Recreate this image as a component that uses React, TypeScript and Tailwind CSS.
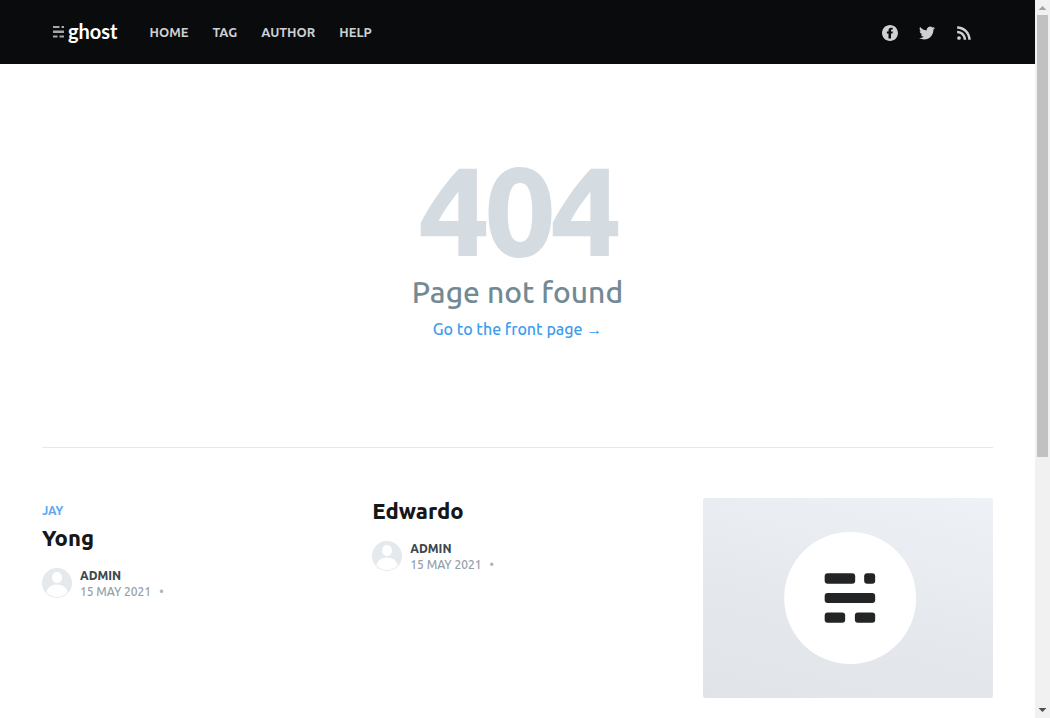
import React from "react";

const navLinks = ["Home", "Tag", "Author", "Help"];

function FacebookIcon() {
  return (
    <svg viewBox="0 0 32 32" className="size-4 fill-current" aria-hidden="true">
      <path d="M16 0C7.200 0 0 7.200 0 16s7.200 16 16 16 16-7.200 16-16S24.800 0 16 0zm5.500 9.200h-1.900c-1.300 0-1.600.7-1.600 1.700v2.300h3.600l-.5 3.900H18V27h-5v-9.900H9.700v-3.900H13v-2.800c0-3.300 2-5 5-5 1.400 0 2.700.1 3.500.2z" />
    </svg>
  );
}

function TwitterIcon() {
  return (
    <svg viewBox="0 0 24 24" className="size-4 fill-current" aria-hidden="true">
      <path d="M23.954 4.569a10 10 0 0 1-2.825.775 4.958 4.958 0 0 0 2.163-2.723 9.990 9.990 0 0 1-3.127 1.184 4.920 4.920 0 0 0-8.384 4.482C7.691 8.094 4.066 6.130 1.640 3.161a4.822 4.822 0 0 0-.666 2.475c0 1.710.87 3.213 2.188 4.096a4.904 4.904 0 0 1-2.228-.616v.061a4.923 4.923 0 0 0 3.946 4.827 4.996 4.996 0 0 1-2.212.085 4.937 4.937 0 0 0 4.604 3.417 9.868 9.868 0 0 1-6.102 2.105c-.39 0-.779-.023-1.170-.067a13.995 13.995 0 0 0 7.557 2.209c9.054 0 13.999-7.496 13.999-13.986 0-.209 0-.42-.015-.63a9.936 9.936 0 0 0 2.460-2.548l-.047-.02z" />
    </svg>
  );
}

function RssIcon() {
  return (
    <svg viewBox="0 0 24 24" className="size-4 fill-current" aria-hidden="true">
      <circle cx="4.500" cy="19.500" r="2.800" />
      <path d="M1.700 8.700v3.800c5.600 0 9.800 4.300 9.800 9.800h3.800c0-7.700-6.100-13.600-13.600-13.600zM1.700 1.700v3.800c9.300 0 16.700 7.500 16.700 16.800h3.800c0-11.400-9.200-20.600-20.500-20.600z" />
    </svg>
  );
}

function Avatar() {
  return (
    <svg viewBox="0 0 30 30" className="size-[30px] shrink-0" aria-hidden="true">
      <circle cx="15" cy="15" r="15" fill="#e3e9ed" />
      <ellipse cx="15" cy="9.500" rx="5" ry="5.700" fill="#fff" />
      <path d="M4.300 24.300C5.500 19.500 9.500 16.500 15 16.500s9.500 3 10.700 7.800C23 27.300 19.200 29 15 29S7 27.300 4.300 24.300z" fill="#fff" />
    </svg>
  );
}

function PostCard({ tag, title }: { tag?: string; title: string }) {
  return (
    <article className="flex flex-col items-start">
      <a href="#post" className="block">
        {tag && (
          <span className="block pt-[3px] pb-1 text-[12px] leading-[20px] font-semibold text-[#5aa7f0] uppercase">
            {tag}
          </span>
        )}
        <h2 className="text-[22px] leading-[26px] font-extrabold text-[#15171a]">{title}</h2>
      </a>
      <footer className="flex items-start gap-2 pt-[17px]">
        <Avatar />
        <div className="text-[12px] leading-4 uppercase">
          <a href="#admin" className="block font-extrabold text-[#3c484e]">Admin</a>
          <p className="font-medium text-[#92a0a9]">
            <time dateTime="2021-05-15">15 May 2021</time>
            <span className="px-2 text-[#a9b5bc]">•</span>
          </p>
        </div>
      </footer>
    </article>
  );
}

function CoverCard() {
  return (
    <a href="#ghost" aria-label="Ghost" className="block h-[200px] overflow-hidden rounded-xs bg-linear-[195deg,#eef2f6,#e5e8ed_55%,#e0e4e9]">
      <svg viewBox="0 0 290 200" className="size-full" aria-hidden="true">
        <circle cx="147" cy="100" r="66" fill="#fff" />
        <g fill="#222425">
          <rect x="121.500" y="75.300" width="30.500" height="10.400" rx="3" />
          <rect x="161" y="75.300" width="11" height="10.400" rx="3" />
          <rect x="121.500" y="95" width="50.500" height="10" rx="3" />
          <rect x="121.500" y="114.400" width="20.500" height="10.400" rx="3" />
          <rect x="151.700" y="114.400" width="20.300" height="10.400" rx="3" />
        </g>
      </svg>
    </a>
  );
}

function ScrollTrack() {
  return (
    <div aria-hidden="true" className="flex w-[15px] shrink-0 flex-col items-center justify-between bg-[#f1f1f1]">
      <svg viewBox="0 0 15 15" className="h-[15px] w-[15px] shrink-0"><path d="M3.500 10h8l-4-4z" fill="#a3a3a3" /></svg>
      <div className="w-full flex-1 px-[2px]">
        <div className="h-[64.3%] bg-[#c1c1c1]" />
      </div>
      <svg viewBox="0 0 15 15" className="h-[15px] w-[15px] shrink-0"><path d="M3.500 5h8l-4 4z" fill="#505050" /></svg>
    </div>
  );
}

export default function App() {
  return (
    <div className="flex h-screen bg-white font-['Ubuntu','Open_Sans','Noto_Sans',sans-serif]">
      <div className="min-w-0 flex-1 overflow-hidden">
        <header className="flex h-16 items-center justify-between bg-[#0a0b0c] pr-[63px] pl-[53px] text-[#ced0d1]">
          <div className="flex items-center gap-8">
            <a href="#home" className="flex items-center gap-[3px] text-white">
              <svg viewBox="0 0 12 12" className="size-3" fill="#a6a8a9" aria-hidden="true">
                <rect x="0" y="0" width="6.500" height="2" />
                <rect x="8.500" y="0" width="2.500" height="2" />
                <rect x="0" y="4.500" width="11" height="2.500" />
                <rect x="0" y="9.500" width="4.500" height="2" />
                <rect x="6.500" y="9.500" width="4.500" height="2" />
              </svg>
              <span className="pb-0.5 font-[Lato,sans-serif] text-[20px] leading-6 font-bold">ghost</span>
            </a>
            <nav className="flex gap-6 text-[13px] leading-5 font-semibold uppercase">
              {navLinks.map((label) => (
                <a key={label} href={`#${label.toLowerCase()}`}>{label}</a>
              ))}
            </nav>
          </div>
          <div className="flex items-center gap-[21px] pt-0.5">
            <a href="#facebook" aria-label="Facebook"><FacebookIcon /></a>
            <a href="#twitter" aria-label="Twitter"><TwitterIcon /></a>
            <a href="#rss" aria-label="RSS"><RssIcon /></a>
          </div>
        </header>

        <main className="px-[42px]">
          <section className="pt-[82px] pb-[106px] text-center">
            <h1 className="text-[126px] leading-[127px] font-extrabold tracking-[-5px] text-[#d4dbe1]">404</h1>
            <p className="text-[30px] leading-[38px] font-medium text-[#738a94]">Page not found</p>
            <a href="#front" className="mt-[6px] inline-block text-[16px] leading-6 font-medium text-[#3e9cf0]">Go to the front page →</a>
          </section>
          <section className="grid grid-cols-3 items-start gap-10 border-t border-[#e3e9ed] pt-[50px]">
            <PostCard tag="Jay" title="Yong" />
            <PostCard title="Edwardo" />
            <CoverCard />
          </section>
        </main>
      </div>
      <ScrollTrack />
    </div>
  );
}
